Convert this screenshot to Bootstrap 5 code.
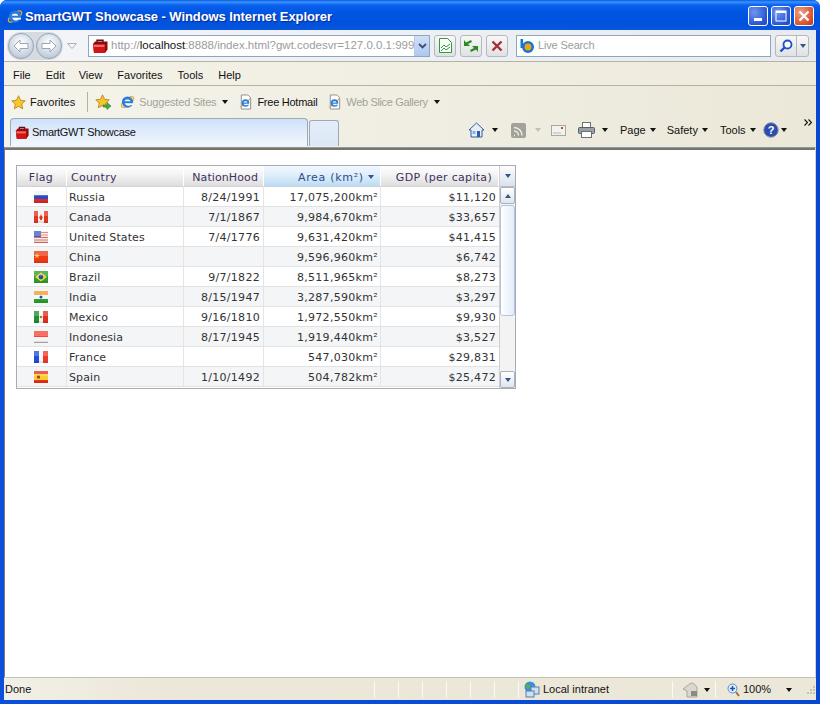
<!DOCTYPE html>
<html lang="en">
<head>
  <meta charset="UTF-8">
  <meta name="viewport" content="width=device-width, initial-scale=1">
  <title>SmartGWT Showcase</title>
  <link href="https://cdn.jsdelivr.net/npm/bootstrap@5.3.0/dist/css/bootstrap.min.css" rel="stylesheet">
  <style>
    html, body { height: 100%; overflow: hidden; background: #fff; }
    body { font: 11px/1 "Liberation Sans", sans-serif; color: #111; }
    .ie-window { height: 704px; background: linear-gradient(90deg, #0a50dc, #0848d0); border-radius: 7px 7px 0 0; }
    .ie-window svg { flex: none; }
    /* title bar */
    .ie-title { height: 30px; padding: 2px 6px 0 7px; border-radius: 7px 7px 0 0; background: linear-gradient(#0a5ce0 0, #3a93ff 2px, #0a62ee 5px, #0055e4 12px, #0052dc 24px, #0a56e0 30px); }
    .ie-title-text { margin-left: 2px; font: bold 13px "Liberation Sans", sans-serif; letter-spacing: -.08px; color: #fff; text-shadow: 1px 1px 1px #0a2a90; }
    .win-btn { width: 20px; height: 20px; margin-left: 3px; border: 1px solid #fff; border-radius: 3px; background: radial-gradient(circle at 30% 30%, #6f96f0, #2a55d4 70%, #2448c0); }
    .win-btn.is-close { background: radial-gradient(circle at 30% 30%, #f0a080, #d8512c 70%, #b8381c); }
    /* inner frame */
    .ie-inner { height: 670px; margin: 0 4px; }
    .ie-address { height: 32px; background: linear-gradient(90deg, #f3f5f8, #e7ebef); border-bottom: 1px solid #b5b2a4; }
    .nav-pill-bg { width: 56px; height: 28px; margin-left: 3px; border-radius: 14px; background: #d6dbe2; gap: 2px; padding: 1px; }
    .nav-round { width: 26px; height: 26px; border-radius: 50%; border: 1px solid #9aa4b2; background: radial-gradient(circle at 50% 35%, #fff, #c5d0dd 70%, #a8b6c6); }
    .addr-box { width: 342px; height: 22px; margin-left: 11px; padding-left: 3px; background: #fff; border: 1px solid #8ea6c0; flex: none; }
    .addr-text { margin-left: 3px; font-size: 11.5px; color: #9c9c9c; white-space: nowrap; width: 303px; overflow: hidden; }
    .addr-text b { font-weight: 400; color: #111; }
    .addr-drop { width: 15px; height: 20px; background: linear-gradient(#d2e0f6, #aec8f2); border-left: 1px solid #b9cbe6; }
    .tool-btn { width: 22px; height: 22px; margin-left: 4px; border: 1px solid #b6b8ba; border-radius: 3px; background: linear-gradient(#f8f8f6, #dfe1e4); flex: none; }
    .search-box { width: 255px; height: 22px; margin-left: 8px; padding-left: 3px; background: #fff; border: 1px solid #8ea6c0; font-size: 11px; letter-spacing: -.15px; color: #9c9c9c; flex: none; }
    .search-logo { margin-right: 2px; }
    .search-btn { width: 34px; height: 22px; margin-left: 4px; border: 1px solid #b6b8ba; border-radius: 3px; background: linear-gradient(#f8f8f6, #dfe1e4); flex: none; }
    .search-btn > span { height: 100%; }
    .search-btn > span:first-child { width: 21px; border-right: 1px solid #b6b8ba; }
    .search-btn > span:last-child { width: 11px; }
    .ie-menu { height: 24px; padding-top: 3px; background: linear-gradient(90deg, #f4f2e8, #eeebdd); border-bottom: 1px solid #b5b2a4; }
    .ie-menu span { margin-left: 9px; }
    .ie-menu .menu-i2 { margin-left: 15px; }
    .ie-menu .menu-i3 { margin-left: 14px; }
    .ie-menu .menu-i4 { margin-left: 15px; }
    .ie-menu .menu-i5 { margin-left: 15px; }
    .ie-menu .menu-i6 { margin-left: 15px; }
    .ie-fav { height: 32px; padding-left: 7px; background: linear-gradient(90deg, #f5f4ec, #ebe8d9); }
    .ie-tabs { height: 29px; padding-bottom: 5px; background: linear-gradient(90deg, #f5f4ec, #ebe8d9); }
    .muted-link { color: #a3a299; }
    .link-sug { letter-spacing: -.2px; }
    .link-free { letter-spacing: -.25px; }
    .link-web { letter-spacing: -.35px; }
    .fav-sep { width: 1px; height: 20px; background: #b5b2a4; margin: 0 7px 0 12px; }
    .fav-ie { margin-left: 8px; }
    .fav-c1 { margin-left: 6px; }
    .fav-p1 { margin-left: 10px; }
    .fav-p2 { margin-left: 10px; }
    .fav-c2 { margin-left: 6px; }
    .page-tab { width: 298px; height: 28px; margin-left: 6px; padding-left: 4px; border: 1px solid #9ea8b6; border-bottom: 0; border-radius: 4px 4px 0 0; background: linear-gradient(#cfe2fa, #f2f7fd); align-self: flex-start; flex: none; letter-spacing: -.3px; }
    .tab-ic { margin-right: 3px; }
    .new-tab { width: 30px; height: 26px; margin: 2px 0 0 1px; border: 1px solid #9ea8b6; border-bottom: 0; border-radius: 3px 3px 0 0; background: linear-gradient(#e4edf9, #dce7f5); align-self: flex-start; flex: none; }
    .caret-dn { display: inline-block; flex: none; width: 0; height: 0; border: 3px solid transparent; border-top: 4px solid #111; border-bottom: 0; }
    .caret-dn.is-grey { border-top-color: #c2c0b4; }
    .tb-home { margin-left: 129px; }
    .tb-c1 { margin-left: 7px; }
    .tb-rss { margin-left: 13px; }
    .tb-c2 { margin-left: 9px; }
    .tb-mail { margin-left: 10px; }
    .tb-print { margin-left: 12px; }
    .tb-c3 { margin-left: 7px; }
    .tb-page { margin-left: 12px; }
    .tb-safety { margin-left: 11px; }
    .tb-tools { margin-left: 12px; }
    .tb-help { margin-left: 7px; }
    .tb-c4 { margin-left: 2px; }
    .tb-more { margin: 0 0 16px 17px; }
    .ie-content { flex: 1; background: #fff; border-top: 1px solid #8f98a8; border-left: 1px solid #7d7b70; border-right: 1px solid #d8d6c8; box-shadow: inset 0 2px 0 #77756a; padding: 17px 0 0 11px; }
    .ie-status { height: 23px; padding: 1px 0 0 1px; background: linear-gradient(90deg, #f2f0e6, #ebe8d9 20%); border-top: 1px solid #c4c2b2; }
    .stat-cell { height: 17px; border-right: 1px solid #fbfaf3; flex: none; }
    .stat-done { width: 370px; }
    .stat-sm { width: 24px; }
    .stat-zone { width: 154px; padding-left: 4px; }
    .stat-zone-text { margin-left: 3px; }
    .stat-prot { width: 43px; padding-left: 9px; }
    .stat-zoom { padding-left: 11px; }
    .stat-zoom-text { margin-left: 3px; }
    .stat-zoom-c { margin-left: 15px; }
    .stat-grip { margin-left: 14px; }
    /* grid */
    .sc-grid { width: 500px; height: 224px; border: 1px solid #a7abb3; font: 11px "DejaVu Sans", Verdana, sans-serif; color: #333; }
    .sc-grid table { width: 482px; flex: none; align-self: flex-start; table-layout: fixed; border-collapse: separate; border-spacing: 0; }
    .grid-c1 { width: 50px; }
    .grid-c2 { width: 117px; }
    .grid-c3 { width: 80px; }
    .grid-c4 { width: 117px; }
    .grid-c5 { width: 118px; }
    .sc-grid th { height: 21px; padding: 3px 5px 0 4px; font-weight: 400; letter-spacing: .3px; color: #41305f; background: linear-gradient(#fff, #f4f4f4 40%, #dedede); border-right: 1px solid #fff; border-bottom: 1px solid #d0d0d0; }
    .sc-grid th.is-sorted { color: #2b4f86; padding-right: 6px; letter-spacing: .7px; background: linear-gradient(#f0f7fe, #e2f0fc 40%, #bcdcf6); }
    .sc-grid th.is-nation { letter-spacing: .1px; }
    .sc-grid th.is-gdp { padding-right: 6px; }
    .sc-grid td { height: 20px; padding: 2px 3px 0 2px; letter-spacing: .3px; border-right: 1px solid #e4e4e4; border-bottom: 1px solid #e2e2e2; white-space: nowrap; overflow: hidden; }
    .sc-grid td.cell-flag { padding: 1px 1px 0 0; }
    .sc-grid td.cell-name { letter-spacing: .1px; }
    .sc-grid td.cell-area { padding-right: 2px; }
    .sc-grid tbody tr:nth-child(even) td { background: #f4f5f7; }
    .sc-grid td:last-child { border-right: 0; }
    .grid-scroll { flex: 1; border-left: 1px solid #cfcfcf; background: #f3f3f3; }
    .grid-scroll-head { height: 21px; background: linear-gradient(#fdfdfd, #d8e2ee); border-bottom: 1px solid #bbb; }
    .grid-scroll-btn { height: 17px; border: 1px solid #a9b2bf; border-radius: 2px; background: linear-gradient(#fff, #dfe5ee); }
    .grid-scroll-thumb { height: 111px; margin-top: 1px; border: 1px solid #b5c6dc; border-radius: 3px; background: linear-gradient(90deg, #fff, #e2edfa); }
    .tri-up { width: 0; height: 0; border: 3px solid transparent; border-bottom: 4px solid #34558c; border-top: 0; }
    .tri-dn { width: 0; height: 0; border: 3px solid transparent; border-top: 4px solid #34558c; border-bottom: 0; }
    .flag-ic { display: block; margin: 0 auto; }
  </style>
</head>
<body>
  <svg width="0" height="0" class="d-block">
    <defs>
      <symbol id="ic-box" viewBox="0 0 16 16">
        <path d="M5 4V2.200h6V4" fill="none" stroke="#5a1010" stroke-width="1.400"/>
        <path d="M1 6l2-2.500h12.500v8L13 15H2z" fill="#8e0a0a"/>
        <path d="M1 6h12v9H2z" fill="#d21414"/>
        <path d="M1.500 6.800h11v2.200h-11z" fill="#f26a6a"/>
      </symbol>
      <symbol id="ic-ie" viewBox="0 0 16 16">
        <ellipse cx="8" cy="8" rx="8" ry="3.400" transform="rotate(-38 8 8)" fill="none" stroke="#e8ad2e" stroke-width="1.300"/>
        <circle cx="8" cy="8" r="6" fill="#2a7cdc"/>
        <path d="M4.800 7.200c.3-2.600 6-2.600 6.400 0z" fill="#fff"/>
        <path d="M5 9.200h9v1.900h-2.500c-1.300 1.600-4.800 1.500-6.500-1.900z" fill="#fff"/>
      </symbol>
      <symbol id="ic-page" viewBox="0 0 16 16">
        <path d="M3.500.5h7l3 3v12h-10z" fill="#fff" stroke="#8c8c8c"/>
        <path d="M2 13c2 .5 9-5 11-9" fill="none" stroke="#e8ad2e" stroke-width="1.200"/>
        <circle cx="8" cy="9" r="4" fill="#2a7cdc"/>
        <path d="M6 8.400c.2-1.500 3.800-1.500 4 0z" fill="#fff"/>
        <path d="M6 9.900h6.500v1H10c-1 1-3 .9-4-1z" fill="#fff"/>
      </symbol>
      <symbol id="ic-star" viewBox="0 0 16 16">
        <path d="M8 .8l2.200 4.800 5 .6-3.700 3.400 1 5.100L8 12.200l-4.500 2.500 1-5.100L.8 6.200l5-.6z" fill="#f7c52c" stroke="#b27a10" stroke-width=".8"/>
      </symbol>
    </defs>
  </svg>

  <div class="ie-window d-flex flex-column">
    <div class="ie-title d-flex align-items-center">
      <svg width="16" height="17"><use href="#ic-ie"/></svg>
      <span class="ie-title-text flex-grow-1">SmartGWT Showcase - Windows Internet Explorer</span>
      <span class="win-btn d-flex align-items-end justify-content-center pb-1"><svg width="8" height="3"><rect width="8" height="3" fill="#fff"/></svg></span>
      <span class="win-btn d-flex align-items-center justify-content-center"><svg width="12" height="12"><rect x="1" y="1" width="10" height="10" fill="none" stroke="#fff"/><rect x="1" y="1" width="10" height="2" fill="#fff"/></svg></span>
      <span class="win-btn is-close d-flex align-items-center justify-content-center"><svg width="12" height="12"><path d="M1.500 1.500l9 9M10.500 1.500l-9 9" stroke="#fff" stroke-width="2.400"/></svg></span>
    </div>

    <div class="ie-inner d-flex flex-column">
      <div class="ie-address d-flex align-items-center">
        <div class="nav-pill-bg d-flex">
          <span class="nav-round d-flex align-items-center justify-content-center"><svg width="16" height="14"><path d="M1 7l6-6v3.500h8v5H7V13z" fill="#fff" stroke="#9aa6b6"/></svg></span>
          <span class="nav-round d-flex align-items-center justify-content-center"><svg width="16" height="14"><path d="M15 7L9 1v3.500H1v5h8V13z" fill="#fff" stroke="#9aa6b6"/></svg></span>
        </div>
        <svg class="ms-1" width="10" height="6"><path d="M.5.500h9L5 5.500z" fill="#f4f6f8" stroke="#a8b0ba"/></svg>
        <div class="addr-box d-flex align-items-center">
          <svg width="16" height="16"><use href="#ic-box"/></svg>
          <span class="addr-text">http://<b>localhost</b>:8888/index.html?gwt.codesvr=127.0.0.1:999</span>
          <span class="addr-drop d-flex align-items-center justify-content-center"><svg width="9" height="6"><path d="M1 1l3.500 3.500L8 1" fill="none" stroke="#3c4f74" stroke-width="1.800"/></svg></span>
        </div>
        <span class="tool-btn d-flex align-items-center justify-content-center"><svg width="13" height="15"><path d="M.5.500h8l4 4v10H.5z" fill="#fff" stroke="#2f9b3a"/><path d="M2 10l3-3 2 2 4-3M2 13l3-3 2 2 4-3" fill="none" stroke="#2f9b3a"/></svg></span>
        <span class="tool-btn d-flex align-items-center justify-content-center"><svg width="16" height="14"><path d="M8 1L3 3.500 1 1v6h6L5 5l4-2zM8 13l5-2.500 2 2.500V7H9l2 2-4 2z" fill="#2c8a20"/></svg></span>
        <span class="tool-btn d-flex align-items-center justify-content-center"><svg width="12" height="12"><path d="M1.500 1.500l9 9M10.500 1.500l-9 9" stroke="#a33038" stroke-width="2.400"/></svg></span>
        <div class="search-box d-flex align-items-center">
          <svg class="search-logo" width="16" height="15"><path d="M1.800 1v9" stroke="#1277d0" stroke-width="2.600"/><circle cx="8" cy="9" r="4.700" fill="#f7a01c" stroke="#1277d0" stroke-width="2.600"/></svg>
          <span>Live Search</span>
        </div>
        <div class="search-btn d-flex">
          <span class="d-flex align-items-center justify-content-center"><svg width="14" height="14"><circle cx="8.500" cy="5.500" r="4" fill="#fff" stroke="#1c50c8" stroke-width="1.800"/><path d="M5.500 8.500L1.500 12.500" stroke="#1c50c8" stroke-width="2.400"/></svg></span>
          <span class="d-flex align-items-center justify-content-center"><span class="tri-dn"></span></span>
        </div>
      </div>

      <div class="ie-menu d-flex align-items-center">
        <span>File</span><span class="menu-i2">Edit</span><span class="menu-i3">View</span><span class="menu-i4">Favorites</span><span class="menu-i5">Tools</span><span class="menu-i6">Help</span>
      </div>

      <div class="ie-fav d-flex align-items-center">
        <svg width="15" height="15"><use href="#ic-star"/></svg>
        <span class="ms-1">Favorites</span>
        <span class="fav-sep"></span>
        <svg width="17" height="16"><use href="#ic-star" width="15" height="15"/><path d="M8 11h4V8.500l4 3.500-4 3.500V13H8z" fill="#49b03a" stroke="#2c7a20" stroke-width=".6"/></svg>
        <svg class="fav-ie" width="15" height="16"><use href="#ic-ie"/></svg>
        <span class="muted-link link-sug ms-1">Suggested Sites</span>
        <span class="caret-dn fav-c1"></span>
        <svg class="fav-p1" width="15" height="16"><use href="#ic-page"/></svg>
        <span class="link-free ms-1">Free Hotmail</span>
        <svg class="fav-p2" width="15" height="16"><use href="#ic-page"/></svg>
        <span class="muted-link link-web ms-1">Web Slice Gallery</span>
        <span class="caret-dn fav-c2"></span>
      </div>

      <div class="ie-tabs d-flex align-items-center">
        <div class="page-tab d-flex align-items-center">
          <svg class="tab-ic" width="14" height="15"><use href="#ic-box"/></svg>
          <span>SmartGWT Showcase</span>
        </div>
        <div class="new-tab"></div>
        <svg class="tb-home" width="17" height="16"><path d="M8.500 1L1 8h2v7h11V8h2z" fill="#e9eef6" stroke="#2f5ea8"/><rect x="9" y="9" width="3" height="6" fill="#2f5ea8"/><rect x="4.500" y="9" width="3" height="3" fill="#8fb0dc"/></svg>
        <span class="caret-dn tb-c1"></span>
        <svg class="tb-rss" width="15" height="15"><rect width="15" height="15" rx="2" fill="#a3a29a"/><path d="M3 12.500h1M3 8a4.500 4.500 0 0 1 4.500 4.500M3 4.500a8 8 0 0 1 8 8" fill="none" stroke="#eeeee8" stroke-width="1.500"/></svg>
        <span class="caret-dn is-grey tb-c2"></span>
        <svg class="tb-mail" width="15" height="11"><rect x=".5" y=".5" width="14" height="10" fill="#f2f2ee" stroke="#a8a8a0"/><path d="M2 8h8" stroke="#b8b8b0"/><rect x="10" y="2" width="2" height="2" fill="#d04040"/></svg>
        <svg class="tb-print" width="17" height="16"><rect x="4.500" y=".5" width="8" height="6" fill="#fff" stroke="#707070"/><rect x=".5" y="5.500" width="16" height="6" rx="1" fill="#9aa0a8" stroke="#5a5f66"/><rect x="3.500" y="9.500" width="10" height="6" fill="#fff" stroke="#707070"/></svg>
        <span class="caret-dn tb-c3"></span>
        <span class="tb-page">Page</span><span class="caret-dn ms-1"></span>
        <span class="tb-safety">Safety</span><span class="caret-dn ms-1"></span>
        <span class="tb-tools">Tools</span><span class="caret-dn ms-1"></span>
        <svg class="tb-help" width="16" height="16"><circle cx="8" cy="8" r="7.200" fill="#2c4cb0" stroke="#7f8aa8"/><text x="8" y="12" font-size="11" font-weight="700" font-family="Liberation Sans" fill="#fff" text-anchor="middle">?</text></svg>
        <span class="caret-dn tb-c4"></span>
        <svg class="tb-more" width="8" height="7"><path d="M.5.500l3 3-3 3M4.500.500l3 3-3 3" fill="none" stroke="#111" stroke-width="1.100"/></svg>
      </div>

      <div class="ie-content">
        <div class="sc-grid d-flex">
          <table>
            <colgroup><col class="grid-c1"><col class="grid-c2"><col class="grid-c3"><col class="grid-c4"><col class="grid-c5"></colgroup>
            <thead>
              <tr>
                <th class="text-center">Flag</th>
                <th>Country</th>
                <th class="text-end is-nation">NationHood</th>
                <th class="text-end is-sorted">Area (km²) <span class="tri-dn d-inline-block align-top mt-1"></span></th>
                <th class="text-end is-gdp">GDP (per capita)</th>
              </tr>
            </thead>
            <tbody id="gridRows"></tbody>
          </table>
          <div class="grid-scroll d-flex flex-column">
            <div class="grid-scroll-head d-flex align-items-center justify-content-center"><span class="tri-dn"></span></div>
            <div class="grid-scroll-btn d-flex align-items-center justify-content-center"><span class="tri-up"></span></div>
            <div class="grid-scroll-thumb"></div>
            <div class="flex-grow-1"></div>
            <div class="grid-scroll-btn d-flex align-items-center justify-content-center"><span class="tri-dn"></span></div>
          </div>
        </div>
      </div>

      <div class="ie-status d-flex align-items-center">
        <span class="stat-cell stat-done d-flex align-items-center">Done</span>
        <span class="stat-cell stat-sm"></span><span class="stat-cell stat-sm"></span><span class="stat-cell stat-sm"></span><span class="stat-cell stat-sm"></span><span class="stat-cell stat-sm"></span><span class="stat-cell stat-sm"></span>
        <span class="stat-cell stat-zone d-flex align-items-center">
          <svg width="17" height="17"><circle cx="7" cy="6" r="5.500" fill="#3c8ed8"/><path d="M3 3l4 1-1 4-3-1z" fill="#5cb040"/><rect x="8" y="6" width="8" height="7" fill="#cfe0f2" stroke="#5a7ea8"/><rect x="3" y="10" width="8" height="6" fill="#cfe0f2" stroke="#5a7ea8"/></svg>
          <span class="stat-zone-text">Local intranet</span>
        </span>
        <span class="stat-cell stat-prot d-flex align-items-center">
          <svg width="18" height="16"><path d="M9 1a6 6 0 0 1 6 6v8H5V9L1 7z" fill="#d8d8d0" stroke="#a8a8a0"/><rect x="9" y="9" width="6" height="5" fill="#8a8a82"/></svg>
          <span class="caret-dn ms-1"></span>
        </span>
        <span class="stat-zoom d-flex align-items-center">
          <svg width="13" height="14"><circle cx="5.500" cy="5.500" r="4.500" fill="#e2eefa" stroke="#5a8ac0"/><path d="M3 5.500h5M5.500 3v5" stroke="#1c50c8" stroke-width="1.500"/><path d="M9 9l3 4" stroke="#a87038" stroke-width="2"/></svg>
          <span class="stat-zoom-text">100%</span>
          <span class="caret-dn stat-zoom-c"></span>
          <svg class="stat-grip" width="10" height="10"><path d="M7 1h2v2H7zM4 4h2v2H4zM7 4h2v2H7zM1 7h2v2H1zM4 7h2v2H4zM7 7h2v2H7z" fill="#c6c3b2"/></svg>
        </span>
      </div>
    </div>
  </div>

  <script>
    const gloss = '<rect width="14" height="5" fill="#fff" opacity=".22"/><rect y="10" width="14" height="2" fill="#000" opacity=".08"/>';
    const f = {
      ru: '<rect width="14" height="4" fill="#f4f4f4"/><rect y="4" width="14" height="4" fill="#2a4cc0"/><rect y="8" width="14" height="4" fill="#e02828"/>',
      ca: '<rect width="14" height="12" fill="#f6f0ee"/><rect width="4" height="12" fill="#e0381c"/><rect x="10" width="4" height="12" fill="#e0381c"/><path d="M7 3l2 4-1 .5V9H6V7.500L5 7z" fill="#e0381c"/>',
      us: '<rect width="14" height="12" fill="#f4eeee"/><path d="M0 1.500h14M0 4h14M0 6.500h14M0 9h14M0 11.500h14" stroke="#e06a5a" stroke-width="1.200"/><rect width="7" height="6" fill="#3a62c8"/>',
      cn: '<rect width="14" height="12" fill="#ee3a16"/><path d="M3 2l.8 2H6L4.200 5.200l.6 2L3 6l-1.800 1.200.6-2L0 4h2.200z" fill="#f8c82c"/>',
      br: '<rect width="14" height="12" fill="#2ca02c"/><path d="M7 1.500L13 6l-6 4.500L1 6z" fill="#f6d82c"/><circle cx="7" cy="6" r="2.400" fill="#2a4cb0"/>',
      in: '<rect width="14" height="4" fill="#f49a2c"/><rect y="4" width="14" height="4" fill="#f6f6f6"/><rect y="8" width="14" height="4" fill="#2ca02c"/><circle cx="7" cy="6" r="1.500" fill="#2a4cb0"/>',
      mx: '<rect width="14" height="12" fill="#f6f6f2"/><rect width="5" height="12" fill="#1e9030"/><rect x="9" width="5" height="12" fill="#e03020"/><circle cx="7" cy="6" r="1.300" fill="#a87838"/>',
      id: '<rect width="14" height="6" fill="#f4483c"/><rect y="6" width="14" height="6" fill="#f4f4f2"/><path d="M0 11.500h14" stroke="#b0b0b0"/>',
      fr: '<rect width="14" height="12" fill="#f6f6f6"/><rect width="5" height="12" fill="#1c50d8"/><rect x="9" width="5" height="12" fill="#f03a28"/>',
      es: '<rect width="14" height="12" fill="#e8301c"/><rect y="3" width="14" height="6" fill="#f8cc2c"/><rect x="3" y="4.500" width="3" height="3" fill="#b84020"/>'
    };
    const rows = [
      ['ru', 'Russia', '8/24/1991', '17,075,200km²', '$11,120'],
      ['ca', 'Canada', '7/1/1867', '9,984,670km²', '$33,657'],
      ['us', 'United States', '7/4/1776', '9,631,420km²', '$41,415'],
      ['cn', 'China', '', '9,596,960km²', '$6,742'],
      ['br', 'Brazil', '9/7/1822', '8,511,965km²', '$8,273'],
      ['in', 'India', '8/15/1947', '3,287,590km²', '$3,297'],
      ['mx', 'Mexico', '9/16/1810', '1,972,550km²', '$9,930'],
      ['id', 'Indonesia', '8/17/1945', '1,919,440km²', '$3,527'],
      ['fr', 'France', '', '547,030km²', '$29,831'],
      ['es', 'Spain', '1/10/1492', '504,782km²', '$25,472']
    ];
    const tbody = document.getElementById('gridRows');
    rows.forEach(r => {
      const tr = document.createElement('tr');
      tr.innerHTML = `<td class="cell-flag"><svg class="flag-ic" width="14" height="12">${f[r[0]]}${gloss}</svg></td><td class="cell-name">${r[1]}</td><td class="text-end">${r[2]}</td><td class="text-end cell-area">${r[3]}</td><td class="text-end">${r[4]}</td>`;
      tbody.appendChild(tr);
    });
  </script>
  <script src="https://cdn.jsdelivr.net/npm/bootstrap@5.3.0/dist/js/bootstrap.bundle.min.js"></script>
</body>
</html>
